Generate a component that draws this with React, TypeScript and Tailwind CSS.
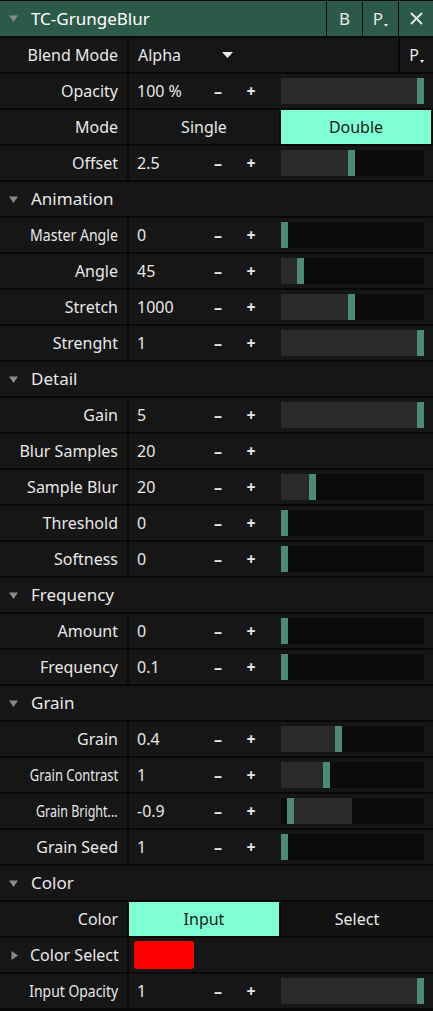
import React from "react";

type Slider = { thumb: number; from?: number; to?: number };

type Row =
  | { kind: "section"; label: string; open?: boolean }
  | { kind: "num"; label: string; value: string; slider?: Slider; sx?: number };

const FULL: Slider = { thumb: 136 };

const rows: Row[] = [
  { kind: "num", label: "Opacity", value: "100 %", slider: FULL },
];

const rest: Row[] = [
  { kind: "num", label: "Offset", value: "2.5", slider: { thumb: 67 } },
  { kind: "section", label: "Animation" },
  { kind: "num", label: "Master Angle", value: "0", slider: { thumb: 0 }, sx: 0.88 },
  { kind: "num", label: "Angle", value: "45", slider: { thumb: 16 } },
  { kind: "num", label: "Stretch", value: "1000", slider: { thumb: 67 } },
  { kind: "num", label: "Strenght", value: "1", slider: FULL },
  { kind: "section", label: "Detail" },
  { kind: "num", label: "Gain", value: "5", slider: FULL },
  { kind: "num", label: "Blur Samples", value: "20" },
  { kind: "num", label: "Sample Blur", value: "20", slider: { thumb: 28 } },
  { kind: "num", label: "Threshold", value: "0", slider: { thumb: 0 } },
  { kind: "num", label: "Softness", value: "0", slider: { thumb: 0 } },
  { kind: "section", label: "Frequency" },
  { kind: "num", label: "Amount", value: "0", slider: { thumb: 0 } },
  { kind: "num", label: "Frequency", value: "0.1", slider: { thumb: 0 } },
  { kind: "section", label: "Grain" },
  { kind: "num", label: "Grain", value: "0.4", slider: { thumb: 54 } },
  { kind: "num", label: "Grain Contrast", value: "1", slider: { thumb: 42 }, sx: 0.81 },
  { kind: "num", label: "Grain Bright...", value: "-0.9", slider: { thumb: 6, from: 12, to: 71 }, sx: 0.78 },
  { kind: "num", label: "Grain Seed", value: "1", slider: { thumb: 0 } },
  { kind: "section", label: "Color" },
];

function Caret({ dir = "down" }: { dir?: "down" | "right" }) {
  return (
    <svg width="9" height="9" viewBox="0 0 9 9" className="shrink-0">
      {dir === "down" ? (
        <path d="M0 1.5 H9 L4.5 8 Z" fill="#8a8a8a" />
      ) : (
        <path d="M1.5 0 V9 L8 4.5 Z" fill="#8a8a8a" />
      )}
    </svg>
  );
}

function PGlyph() {
  return (
    <span className="relative inline-flex items-end">
      P
      <svg width="4" height="3" viewBox="0 0 4 3" className="mb-[4px] ml-[1px]">
        <path d="M0 0 H4 L2 3 Z" fill="#e8e8e8" />
      </svg>
    </span>
  );
}

function Label({ text, sx }: { text: string; sx?: number }) {
  return (
    <div className="flex h-full w-[127px] shrink-0 items-center justify-end bg-[#161616] pr-[9px]">
      <span
        className="inline-block origin-right whitespace-nowrap"
        style={sx ? { transform: `scaleX(${sx})` } : undefined}
      >
        {text}
      </span>
    </div>
  );
}

function SliderBar({ s }: { s: Slider }) {
  const from = s.from ?? 0;
  const to = s.to ?? s.thumb;
  return (
    <div className="relative h-[26px] w-[143px] bg-[#0b0b0b]">
      <div
        className="absolute top-0 h-full bg-[#2a2a2a]"
        style={{ left: from, width: to - from }}
      />
      <div
        className="absolute top-0 h-full w-[7px] bg-[#4b8b74]"
        style={{ left: s.thumb }}
      />
    </div>
  );
}

function NumRow({ r }: { r: Extract<Row, { kind: "num" }> }) {
  return (
    <div className="flex h-[34px] gap-[2px]">
      <Label text={r.label} sx={r.sx} />
      <div className="flex flex-1 items-center bg-[#161616]">
        <div className="w-[73px] pl-[8px]">{r.value}</div>
        <div className="w-[32px] text-center font-bold">–</div>
        <div className="w-[34px] text-center font-bold">+</div>
        <div className="ml-[13px]">{r.slider && <SliderBar s={r.slider} />}</div>
      </div>
    </div>
  );
}

function SectionRow({ label }: { label: string }) {
  return (
    <div className="flex h-[34px] items-center gap-[13px] bg-[#161616] pl-[9px] text-[17px]">
      <Caret />
      <span>{label}</span>
    </div>
  );
}

function render(r: Row, i: number) {
  if (r.kind === "section") return <SectionRow key={i} label={r.label} />;
  return <NumRow key={i} r={r} />;
}

export default function App() {
  return (
    <div
      className="flex min-h-[1011px] w-[433px] flex-col gap-[2px] bg-[#080808] pt-[1px] text-[16px] text-[#e8e8e8]"
      style={{ fontFamily: '"Noto Sans", "Open Sans", sans-serif' }}
    >
      <div className="flex h-[35px] gap-[1px]">
        <div className="flex flex-1 items-center gap-[13px] bg-[#2c5a48] pl-[9px]">
          <Caret />
          <span className="text-[17px] text-white">TC-GrungeBlur</span>
        </div>
        <div className="flex w-[35px] items-center justify-center bg-[#2c5a48] text-[17px]">B</div>
        <div className="flex w-[35px] items-center justify-center bg-[#2c5a48] text-[17px]">
          <PGlyph />
        </div>
        <div className="flex w-[34px] items-center justify-center bg-[#2c5a48]">
          <svg width="13" height="13" viewBox="0 0 13 13">
            <path d="M1 1 L12 12 M12 1 L1 12" stroke="#e8e8e8" strokeWidth="1.8" />
          </svg>
        </div>
      </div>

      <div className="flex h-[34px] gap-[2px]">
        <Label text="Blend Mode" />
        <div className="flex w-[269px] items-center bg-[#161616] pl-[9px]">
          <span className="w-[84px]">Alpha</span>
          <svg width="11" height="6" viewBox="0 0 11 6">
            <path d="M0 0 H11 L5.5 6 Z" fill="#e8e8e8" />
          </svg>
        </div>
        <div className="flex flex-1 items-center justify-center bg-[#161616]">
          <PGlyph />
        </div>
      </div>

      {rows.map(render)}

      <div className="flex h-[34px] gap-[2px]">
        <Label text="Mode" />
        <div className="flex w-[150px] items-center justify-center bg-[#161616]">Single</div>
        <div className="flex w-[150px] items-center justify-center bg-[#7fffd4] text-[#1a1a1a]">
          Double
        </div>
      </div>

      {rest.map(render)}

      <div className="flex h-[34px] gap-[2px]">
        <Label text="Color" />
        <div className="flex w-[150px] items-center justify-center bg-[#7fffd4] text-[#1a1a1a]">
          Input
        </div>
        <div className="flex flex-1 items-center justify-center bg-[#121212]">Select</div>
      </div>

      <div className="flex h-[34px] gap-[2px]">
        <div className="flex w-[127px] shrink-0 items-center gap-[11px] bg-[#161616] pl-[10px]">
          <Caret dir="right" />
          <span className="whitespace-nowrap">Color Select</span>
        </div>
        <div className="flex flex-1 items-center bg-[#161616] pl-[5px]">
          <div className="h-[28px] w-[60px] rounded-[3px] bg-[#ff0000]" />
        </div>
      </div>

      <NumRow r={{ kind: "num", label: "Input Opacity", value: "1", slider: FULL, sx: 0.87 }} />
    </div>
  );
}
